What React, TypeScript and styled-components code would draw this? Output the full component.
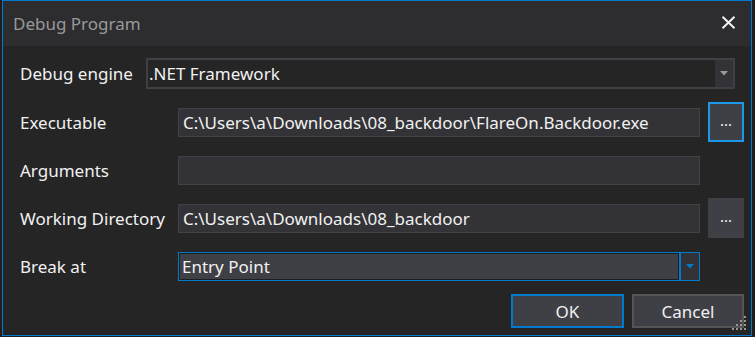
import React from "react";
import styled, { createGlobalStyle } from "styled-components";

const Global = createGlobalStyle`
  html, body {
    margin: 0;
    padding: 0;
    background: #1e1e1e;
  }
  body {
    font-family: "Noto Sans", "Open Sans", sans-serif;
  }
`;

const Page = styled.div`
  width: 755px;
  height: 337px;
  overflow: hidden;
  padding-left: 2px;
  box-sizing: border-box;
`;

const Dialog = styled.div`
  width: 750px;
  height: 336px;
  box-sizing: border-box;
  border: 1px solid #007acc;
  background: #252526;
  display: flex;
  flex-direction: column;
  position: relative;
`;

const TitleBar = styled.div`
  height: 45px;
  background: #2d2d30;
  display: flex;
  align-items: center;
  justify-content: space-between;
  padding: 0 15px 0 10px;
  flex-shrink: 0;
`;

const Title = styled.span`
  color: #999999;
  font-size: 17px;
`;

const CloseButton = styled.div`
  width: 16px;
  height: 14px;
  display: flex;
  align-items: center;
  justify-content: center;
  margin-top: -3px;
`;

const Body = styled.div`
  flex: 1;
  display: flex;
  flex-direction: column;
  padding: 12px 6px 0 17px;
`;

const EngineRow = styled.div`
  display: grid;
  grid-template-columns: 126px 589px;
  align-items: center;
  height: 31px;
`;

const Label = styled.span`
  color: #f1f1f1;
  font-size: 17px;
  white-space: nowrap;
`;

const Combo = styled.div<{ $focused?: boolean }>`
  height: ${(p) => (p.$focused ? "29px" : "31px")};
  box-sizing: border-box;
  display: flex;
  border: ${(p) => (p.$focused ? "1px solid #007acc" : "2px solid #3f3f46")};
  background: ${(p) => (p.$focused ? "#3f3f46" : "#252526")};
`;

const ComboText = styled.div<{ $focused?: boolean }>`
  flex: 1;
  display: flex;
  align-items: center;
  padding-left: ${(p) => (p.$focused ? "2px" : "1px")};
  color: #f1f1f1;
  font-size: 17px;
  white-space: nowrap;
  border: ${(p) => (p.$focused ? "1px solid #1e1e1e" : "none")};
`;

const ComboArrow = styled.div<{ $focused?: boolean }>`
  width: 18px;
  background: #333337;
  display: flex;
  align-items: center;
  justify-content: center;
  border-left: ${(p) => (p.$focused ? "2px solid #007acc" : "none")};
`;

const Grid = styled.div`
  display: grid;
  grid-template-columns: 158px 522px 44px;
  grid-auto-rows: 40px;
  row-gap: 8px;
  align-items: center;
  margin-top: 13px;
`;

const TextBox = styled.div`
  height: 29px;
  box-sizing: border-box;
  border: 1px solid #434346;
  background: #333337;
  color: #f1f1f1;
  font-size: 17px;
  display: flex;
  align-items: center;
  padding-left: 4px;
  white-space: nowrap;
  overflow: hidden;
`;

const BrowseButton = styled.div<{ $focused?: boolean }>`
  justify-self: end;
  width: 36px;
  height: 40px;
  box-sizing: border-box;
  border: 2px solid ${(p) => (p.$focused ? "#1c97ea" : "#3f3f46")};
  background: #3f3f46;
  color: #f1f1f1;
  font-size: 15px;
  display: flex;
  align-items: center;
  justify-content: center;
  padding-bottom: 4px;
`;

const Footer = styled.div`
  display: flex;
  justify-content: flex-end;
  gap: 8px;
  margin-top: 8px;
  padding-right: 1px;
`;

const DialogButton = styled.div<{ $primary?: boolean }>`
  width: ${(p) => (p.$primary ? "113px" : "112px")};
  height: 34px;
  box-sizing: border-box;
  border: 2px solid ${(p) => (p.$primary ? "#007acc" : "#555555")};
  background: #3f3f46;
  color: #f1f1f1;
  font-size: 17px;
  display: flex;
  align-items: center;
  justify-content: center;
`;

const Grip = styled.svg`
  position: absolute;
  right: 3px;
  bottom: 3px;
`;

const Arrow = ({ color }: { color: string }) => (
  <svg width="8" height="5" viewBox="0 0 8 5">
    <path d="M0 0 H8 L4 4.5 Z" fill={color} />
  </svg>
);

function ResizeGrip() {
  const dots: React.ReactElement[] = [];
  for (let row = 0; row < 4; row++) {
    for (let col = 3 - row; col < 4; col++) {
      dots.push(<rect key={`${row}-${col}`} x={col * 4} y={row * 4} width="2" height="2" fill="#999999" />);
    }
  }
  return (
    <Grip width="16" height="16" viewBox="0 0 16 16">
      {dots}
    </Grip>
  );
}

export default function App() {
  return (
    <>
      <Global />
      <Page>
        <Dialog>
          <TitleBar>
            <Title>Debug Program</Title>
            <CloseButton>
              <svg width="15" height="13" viewBox="0 0 15 13">
                <path d="M1.5 0.8 L13.5 12.2 M13.5 0.8 L1.5 12.2" stroke="#f1f1f1" strokeWidth="2" />
              </svg>
            </CloseButton>
          </TitleBar>
          <Body>
            <EngineRow>
              <Label>Debug engine</Label>
              <Combo>
                <ComboText>.NET Framework</ComboText>
                <ComboArrow>
                  <Arrow color="#999999" />
                </ComboArrow>
              </Combo>
            </EngineRow>
            <Grid>
              <Label>Executable</Label>
              <TextBox>C:\Users\a\Downloads\08_backdoor\FlareOn.Backdoor.exe</TextBox>
              <BrowseButton $focused>...</BrowseButton>

              <Label>Arguments</Label>
              <TextBox />
              <span />

              <Label>Working Directory</Label>
              <TextBox>C:\Users\a\Downloads\08_backdoor</TextBox>
              <BrowseButton>...</BrowseButton>

              <Label>Break at</Label>
              <Combo $focused>
                <ComboText $focused>Entry Point</ComboText>
                <ComboArrow $focused>
                  <Arrow color="#007acc" />
                </ComboArrow>
              </Combo>
              <span />
            </Grid>
            <Footer>
              <DialogButton $primary>OK</DialogButton>
              <DialogButton>Cancel</DialogButton>
            </Footer>
          </Body>
          <ResizeGrip />
        </Dialog>
      </Page>
    </>
  );
}
